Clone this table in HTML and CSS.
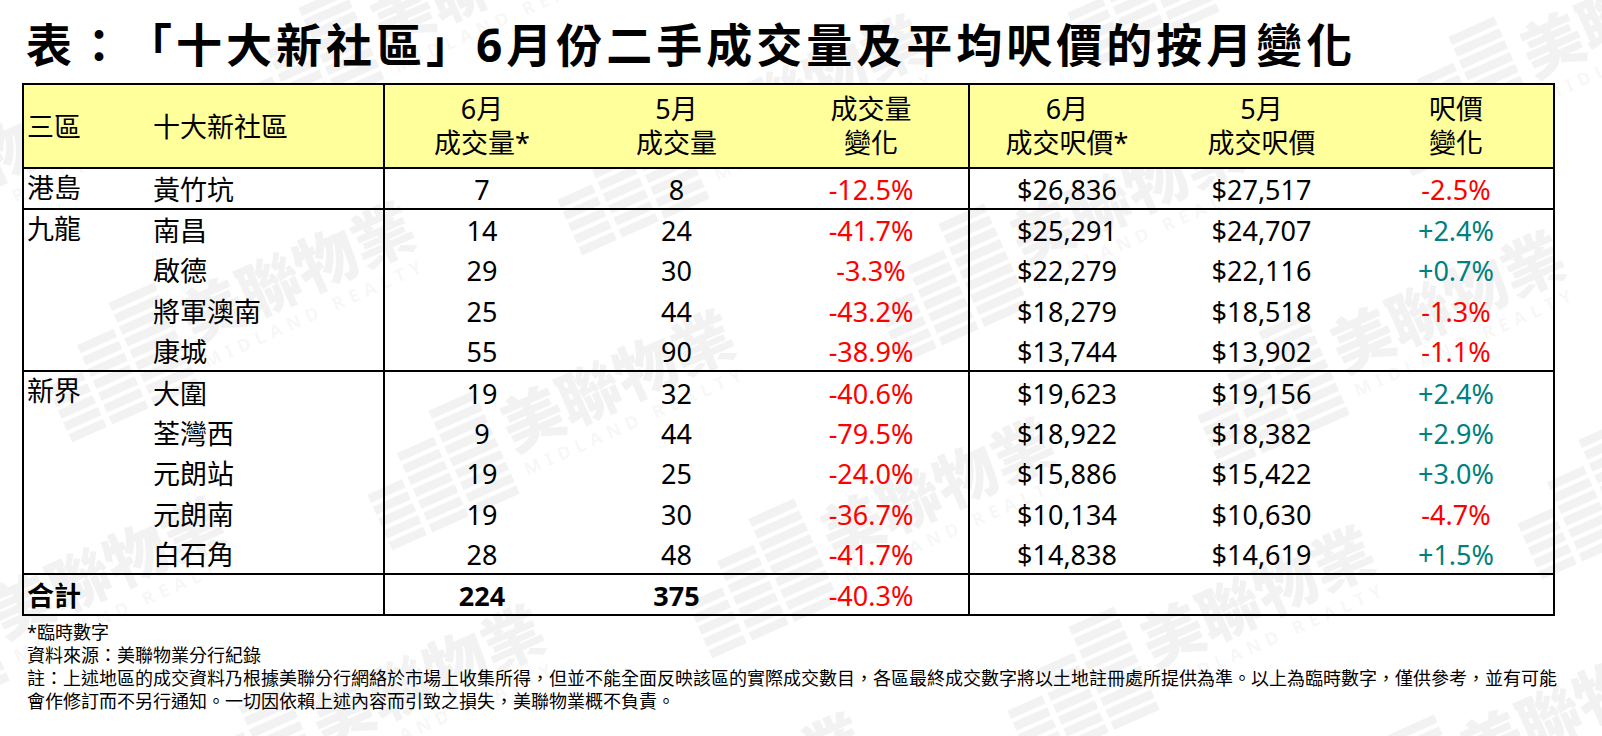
FILE: index.html
```html
<!DOCTYPE html>
<html lang="zh-Hant">
<head>
<meta charset="utf-8">
<title>十大新社區 6月份二手成交量及平均呎價</title>
<link rel="stylesheet" href="styles.css">
</head>
<body>
<svg class="defs" width="0" height="0" aria-hidden="true">
  <defs>
    <g id="logo">
      <rect x="0" y="52" width="38" height="9"/><rect x="0" y="65" width="38" height="9"/><rect x="0" y="78" width="38" height="9"/><rect x="0" y="91" width="38" height="9"/><rect x="0" y="104" width="38" height="9"/>
      <rect x="44" y="26" width="40" height="9"/><rect x="44" y="39" width="40" height="9"/><rect x="44" y="52" width="40" height="9"/><rect x="44" y="65" width="40" height="9"/><rect x="44" y="78" width="40" height="9"/><rect x="44" y="91" width="40" height="9"/><rect x="44" y="104" width="40" height="9"/>
      <rect x="90" y="0" width="50" height="9"/><rect x="90" y="13" width="50" height="9"/><rect x="90" y="26" width="50" height="9"/><rect x="90" y="39" width="50" height="9"/><rect x="90" y="52" width="50" height="9"/><rect x="90" y="65" width="50" height="9"/><rect x="90" y="78" width="50" height="9"/><rect x="90" y="91" width="50" height="9"/><rect x="90" y="104" width="50" height="9"/>
    </g>
  </defs>
</svg>
<div class="watermarks" aria-hidden="true">
  <div class="wm wm-a"><svg class="wm-logo" viewBox="0 0 140 115"><use href="#logo"/></svg><div class="wm-text"><div class="wm-cn">美聯物業</div><div class="wm-en">MIDLAND REALTY</div></div></div>
  <div class="wm wm-b"><svg class="wm-logo" viewBox="0 0 140 115"><use href="#logo"/></svg><div class="wm-text"><div class="wm-cn">美聯物業</div><div class="wm-en">MIDLAND REALTY</div></div></div>
  <div class="wm wm-c"><svg class="wm-logo" viewBox="0 0 140 115"><use href="#logo"/></svg><div class="wm-text"><div class="wm-cn">美聯物業</div><div class="wm-en">MIDLAND REALTY</div></div></div>
  <div class="wm wm-d"><svg class="wm-logo" viewBox="0 0 140 115"><use href="#logo"/></svg><div class="wm-text"><div class="wm-cn">美聯物業</div><div class="wm-en">MIDLAND REALTY</div></div></div>
  <div class="wm wm-e"><svg class="wm-logo" viewBox="0 0 140 115"><use href="#logo"/></svg><div class="wm-text"><div class="wm-cn">美聯物業</div><div class="wm-en">MIDLAND REALTY</div></div></div>
  <div class="wm wm-f"><svg class="wm-logo" viewBox="0 0 140 115"><use href="#logo"/></svg><div class="wm-text"><div class="wm-cn">美聯物業</div><div class="wm-en">MIDLAND REALTY</div></div></div>
  <div class="wm wm-g"><svg class="wm-logo" viewBox="0 0 140 115"><use href="#logo"/></svg><div class="wm-text"><div class="wm-cn">美聯物業</div><div class="wm-en">MIDLAND REALTY</div></div></div>
  <div class="wm wm-h"><svg class="wm-logo" viewBox="0 0 140 115"><use href="#logo"/></svg><div class="wm-text"><div class="wm-cn">美聯物業</div><div class="wm-en">MIDLAND REALTY</div></div></div>
  <div class="wm wm-i"><svg class="wm-logo" viewBox="0 0 140 115"><use href="#logo"/></svg><div class="wm-text"><div class="wm-cn">美聯物業</div><div class="wm-en">MIDLAND REALTY</div></div></div>
  <div class="wm wm-j"><svg class="wm-logo" viewBox="0 0 140 115"><use href="#logo"/></svg><div class="wm-text"><div class="wm-cn">美聯物業</div><div class="wm-en">MIDLAND REALTY</div></div></div>
  <div class="wm wm-k"><svg class="wm-logo" viewBox="0 0 140 115"><use href="#logo"/></svg><div class="wm-text"><div class="wm-cn">美聯物業</div><div class="wm-en">MIDLAND REALTY</div></div></div>
  <div class="wm wm-l"><svg class="wm-logo" viewBox="0 0 140 115"><use href="#logo"/></svg><div class="wm-text"><div class="wm-cn">美聯物業</div><div class="wm-en">MIDLAND REALTY</div></div></div>
  <div class="wm wm-m"><svg class="wm-logo" viewBox="0 0 140 115"><use href="#logo"/></svg><div class="wm-text"><div class="wm-cn">美聯物業</div><div class="wm-en">MIDLAND REALTY</div></div></div>
  <div class="wm wm-n"><svg class="wm-logo" viewBox="0 0 140 115"><use href="#logo"/></svg><div class="wm-text"><div class="wm-cn">美聯物業</div><div class="wm-en">MIDLAND REALTY</div></div></div>
  <div class="wm wm-o"><svg class="wm-logo" viewBox="0 0 140 115"><use href="#logo"/></svg><div class="wm-text"><div class="wm-cn">美聯物業</div><div class="wm-en">MIDLAND REALTY</div></div></div>
  <div class="wm wm-p"><svg class="wm-logo" viewBox="0 0 140 115"><use href="#logo"/></svg><div class="wm-text"><div class="wm-cn">美聯物業</div><div class="wm-en">MIDLAND REALTY</div></div></div>
</div>

<div class="page">
  <h1 class="title">表：「十大新社區」6月份二手成交量及平均呎價的按月變化</h1>
  <table class="stats">
    <colgroup>
      <col class="c-region"><col class="c-estate"><col class="c-num"><col class="c-num"><col class="c-num"><col class="c-num"><col class="c-num"><col class="c-num">
    </colgroup>
    <thead>
      <tr class="head">
        <th class="region">三區</th>
        <th class="estate">十大新社區</th>
        <th class="num bl">6月<br>成交量*</th>
        <th class="num">5月<br>成交量</th>
        <th class="num">成交量<br>變化</th>
        <th class="num bl">6月<br>成交呎價*</th>
        <th class="num">5月<br>成交呎價</th>
        <th class="num">呎價<br>變化</th>
      </tr>
    </thead>
    <tbody class="group">
      <tr><td class="region" rowspan="1">港島</td><td class="estate">黃竹坑</td><td class="num bl">7</td><td class="num">8</td><td class="num down">-12.5%</td><td class="num bl">$26,836</td><td class="num">$27,517</td><td class="num down">-2.5%</td></tr>
    </tbody>
    <tbody class="group">
      <tr><td class="region" rowspan="4">九龍</td><td class="estate">南昌</td><td class="num bl">14</td><td class="num">24</td><td class="num down">-41.7%</td><td class="num bl">$25,291</td><td class="num">$24,707</td><td class="num up">+2.4%</td></tr>
      <tr><td class="estate">啟德</td><td class="num bl">29</td><td class="num">30</td><td class="num down">-3.3%</td><td class="num bl">$22,279</td><td class="num">$22,116</td><td class="num up">+0.7%</td></tr>
      <tr><td class="estate">將軍澳南</td><td class="num bl">25</td><td class="num">44</td><td class="num down">-43.2%</td><td class="num bl">$18,279</td><td class="num">$18,518</td><td class="num down">-1.3%</td></tr>
      <tr><td class="estate">康城</td><td class="num bl">55</td><td class="num">90</td><td class="num down">-38.9%</td><td class="num bl">$13,744</td><td class="num">$13,902</td><td class="num down">-1.1%</td></tr>
    </tbody>
    <tbody class="group">
      <tr><td class="region" rowspan="5">新界</td><td class="estate">大圍</td><td class="num bl">19</td><td class="num">32</td><td class="num down">-40.6%</td><td class="num bl">$19,623</td><td class="num">$19,156</td><td class="num up">+2.4%</td></tr>
      <tr><td class="estate">荃灣西</td><td class="num bl">9</td><td class="num">44</td><td class="num down">-79.5%</td><td class="num bl">$18,922</td><td class="num">$18,382</td><td class="num up">+2.9%</td></tr>
      <tr><td class="estate">元朗站</td><td class="num bl">19</td><td class="num">25</td><td class="num down">-24.0%</td><td class="num bl">$15,886</td><td class="num">$15,422</td><td class="num up">+3.0%</td></tr>
      <tr><td class="estate">元朗南</td><td class="num bl">19</td><td class="num">30</td><td class="num down">-36.7%</td><td class="num bl">$10,134</td><td class="num">$10,630</td><td class="num down">-4.7%</td></tr>
      <tr><td class="estate">白石角</td><td class="num bl">28</td><td class="num">48</td><td class="num down">-41.7%</td><td class="num bl">$14,838</td><td class="num">$14,619</td><td class="num up">+1.5%</td></tr>
    </tbody>
    <tbody class="group total">
      <tr><td class="region strong" colspan="2">合計</td><td class="num bl strong">224</td><td class="num strong">375</td><td class="num down">-40.3%</td><td class="num bl" colspan="3"></td></tr>
    </tbody>
  </table>
  <div class="notes">
    <p class="note">*臨時數字</p>
    <p class="note">資料來源：美聯物業分行紀錄</p>
    <p class="note">註：上述地區的成交資料乃根據美聯分行網絡於市場上收集所得，但並不能全面反映該區的實際成交數目，各區最終成交數字將以土地註冊處所提供為準。以上為臨時數字，僅供參考，並有可能</p>
    <p class="note">會作修訂而不另行通知。一切因依賴上述內容而引致之損失，美聯物業概不負責。</p>
  </div>
</div>
</body>
</html>
```

FILE: styles.css
```css
* { box-sizing: border-box; }

html, body {
  margin: 0;
  padding: 0;
  background: #ffffff;
}

body {
  position: relative;
  width: 1602px;
  height: 736px;
  overflow: hidden;
  font-family: "Noto Sans", "Noto Sans CJK TC", sans-serif;
  color: #000000;
  text-spacing-trim: space-all;
}

.defs {
  position: absolute;
  width: 0;
  height: 0;
}

/* ---------- watermark layer ---------- */
.watermarks {
  position: absolute;
  inset: 0;
  overflow: hidden;
  z-index: 0;
  pointer-events: none;
}

.wm {
  position: absolute;
  width: 400px;
  height: 120px;
  margin-left: -200px;
  margin-top: -60px;
  display: flex;
  align-items: center;
  gap: 10px;
  transform: rotate(-24deg);
  color: rgba(0, 0, 0, 0.05);
}

.wm-logo {
  flex: none;
  width: 140px;
  height: 115px;
  fill: currentColor;
}

.wm-text {
  width: 250px;
  display: flex;
  flex-direction: column;
  align-items: center;
}

.wm-cn {
  font-family: "Noto Sans CJK TC", sans-serif;
  font-weight: 900;
  font-size: 62px;
  line-height: 72px;
  white-space: nowrap;
}

.wm-en {
  font-family: "Noto Sans", sans-serif;
  font-weight: 700;
  font-size: 18px;
  line-height: 22px;
  letter-spacing: 6px;
  white-space: nowrap;
}

.wm-a { left: 1252px; top: -64px; }
.wm-b { left: 1572px; top: 44px; }
.wm-c { left: 422px;  top: 15px; }
.wm-d { left: 742px;  top: 123px; }
.wm-e { left: 1062px; top: 231px; }
.wm-f { left: 1382px; top: 339px; }
.wm-g { left: 1702px; top: 447px; }
.wm-h { left: -88px;  top: 202px; }
.wm-i { left: 232px;  top: 310px; }
.wm-j { left: 552px;  top: 418px; }
.wm-k { left: 872px;  top: 526px; }
.wm-l { left: 1192px; top: 634px; }
.wm-m { left: 1512px; top: 742px; }
.wm-n { left: 42px;   top: 605px; }
.wm-o { left: 362px;  top: 713px; }
.wm-p { left: 682px;  top: 821px; }

/* ---------- page content ---------- */
.page {
  position: relative;
  z-index: 1;
  padding: 21px 0 0 22px;
}

.title {
  margin: 0 0 0 4px;
  height: 46px;
  font-size: 46px;
  line-height: 46px;
  font-weight: 700;
  letter-spacing: 4px;
  white-space: nowrap;
  text-spacing-trim: space-all;
}

.stats {
  margin-top: 16px;
  width: 1531px;
  table-layout: fixed;
  border-collapse: collapse;
  border: 2px solid #000;
  font-size: 27px;
}

.c-region { width: 126px; }
.c-estate { width: 235px; }
.c-num { width: 195px; }

.stats th,
.stats td {
  padding: 0;
  font-weight: 400;
  white-space: nowrap;
}

.head {
  height: 84px;
  background: #ffff9c;
}

.head th {
  line-height: 34px;
  vertical-align: middle;
  border-bottom: 2px solid #000;
}

.head th.region { text-align: left; padding-left: 3px; padding-top: 2px; }
.head th.estate { text-align: left; padding-left: 4px; padding-top: 2px; }
.head th.num { text-align: center; }

.group { border-bottom: 2px solid #000; }

.group tr { height: 40.6px; }

.group td {
  line-height: 34px;
  vertical-align: middle;
  padding-top: 4px;
}

.group td.region {
  text-align: left;
  vertical-align: top;
  padding-left: 3px;
  padding-top: 2px;
}

.group td.estate {
  text-align: left;
  padding-left: 4px;
}

.group td.num { text-align: center; }

.total td.region {
  vertical-align: middle;
  padding-top: 3px;
}

.bl { border-left: 2px solid #000; }

.strong { font-weight: 700 !important; }

.down { color: #ff0000; }
.up { color: #008080; }

.notes {
  margin-top: 5px;
  padding-left: 5px;
  font-size: 18px;
  line-height: 23px;
}

.note {
  margin: 0;
  white-space: nowrap;
}
```
